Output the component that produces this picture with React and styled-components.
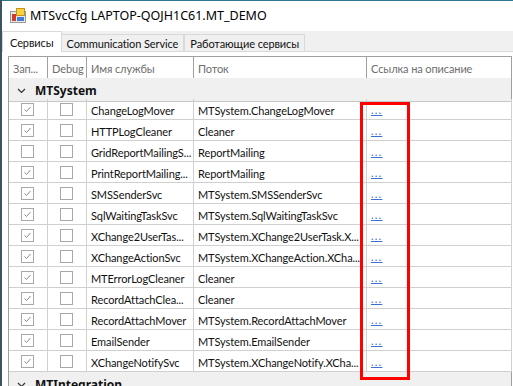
import React from 'react';
import styled, { createGlobalStyle } from 'styled-components';

// строки грида: [запуск, имя, поток]
const rows = [
    [true, 'ChangeLogMover', 'MTSystem.ChangeLogMover'],
    [true, 'HTTPLogCleaner', 'Cleaner'],
    [false, 'GridReportMailingS...', 'ReportMailing'],
    [true, 'PrintReportMailing...', 'ReportMailing'],
    [true, 'SMSSenderSvc', 'MTSystem.SMSSenderSvc'],
    [true, 'SqlWaitingTaskSvc', 'MTSystem.SqlWaitingTaskSvc'],
    [true, 'XChange2UserTas...', 'MTSystem.XChange2UserTask.X...'],
    [true, 'XChangeActionSvc', 'MTSystem.XChangeAction.XCha...'],
    [true, 'MTErrorLogCleaner', 'Cleaner'],
    [true, 'RecordAttachClea...', 'Cleaner'],
    [true, 'RecordAttachMover', 'MTSystem.RecordAttachMover'],
    [true, 'EmailSender', 'MTSystem.EmailSender'],
    [true, 'XChangeNotifySvc', 'MTSystem.XChangeNotify.XCha...'],
];

const tabs = ['Сервисы', 'Communication Service', 'Работающие сервисы'];

function AppIcon() {
    return (
        <svg width="16" height="15" viewBox="0 0 16 15">
            <rect x="0.5" y="3.5" width="15" height="11" fill="#e8e8e8" stroke="#9a9a9a" />
            <rect x="2" y="6" width="4" height="7" fill="#d23a2a" />
            <rect x="6.5" y="0.5" width="8" height="7" fill="#f7d23c" stroke="#c8911a" />
            <rect x="7" y="9" width="7" height="4" fill="#3d7fd6" />
        </svg>
    );
}

function Check({ on }) {
    return (
        <CheckBox>
            {on && (
                <svg width="11" height="11" viewBox="0 0 11 11">
                    <path d="M2.5 5.5 L4.5 7.5 L8.5 3" fill="none" stroke="#8a8a8a" strokeWidth="1" />
                </svg>
            )}
        </CheckBox>
    );
}

function Chevron() {
    return (
        <svg width="9" height="6" viewBox="0 0 9 6">
            <path d="M1 1 L4.5 4.5 L8 1" fill="none" stroke="#333" strokeWidth="1.2" />
        </svg>
    );
}

function App() {
    return (
        <>
            <GlobalStyle />
            <Screen>
                <Window>
                    <TitleBar>
                        <AppIcon />
                        <Title>MTSvcCfg LAPTOP-QOJH1C61.MT_DEMO</Title>
                    </TitleBar>
                    <Body>
                        <TabStrip>
                            {tabs.map((t, i) => (
                                <Tab key={t} active={i === 0}>{t}</Tab>
                            ))}
                        </TabStrip>
                        <Panel>
                            <Grid>
                                <HeadCell>Зап...</HeadCell>
                                <HeadCell>Debug</HeadCell>
                                <HeadCell>Имя службы</HeadCell>
                                <HeadCell>Поток</HeadCell>
                                <HeadCell>Ссылка на описание</HeadCell>

                                <GroupRow>
                                    <Chevron />
                                    <GroupName>MTSystem</GroupName>
                                </GroupRow>

                                {rows.map(([on, name, flow], i) => (
                                    <React.Fragment key={i}>
                                        <CheckCell><Check on={on} /></CheckCell>
                                        <CheckCell><Check on={false} /></CheckCell>
                                        <Cell>{name}</Cell>
                                        <Cell>{flow}</Cell>
                                        <Cell><Link>...</Link></Cell>
                                    </React.Fragment>
                                ))}

                                <GroupRow>
                                    <Chevron />
                                    <GroupName>MTIntegration</GroupName>
                                </GroupRow>
                            </Grid>
                        </Panel>
                    </Body>
                </Window>
                <Highlight />
            </Screen>
        </>
    );
}

export default App;


// styled-components

const GlobalStyle = createGlobalStyle`
    html, body {
        margin: 0;
        padding: 0;
        background: #2d6b83;
        overflow: hidden;
    }
`

const Screen = styled.div`
    position: relative;
    width: 513px;
    height: 386px;
    overflow: hidden;
    background: linear-gradient(90deg, #3b5560 0 2px, #2d7890 2px);
    font-family: "Lato", "Noto Sans", sans-serif;
    font-size: 11px;
    letter-spacing: -0.1px;
    color: #111;
`

const Window = styled.div`
    margin: 1px 0 0 2px;
    width: 511px;
    height: 385px;
    background: #f0f0f0;
    display: flex;
    flex-direction: column;
`

const TitleBar = styled.div`
    height: 30px;
    background: #fff;
    display: flex;
    align-items: center;
    gap: 4px;
    padding: 0 0 2px 8px;
    box-sizing: border-box;
`

const Title = styled.span`
    font-family: "Noto Sans", "Open Sans", sans-serif;
    font-size: 12.5px;
    letter-spacing: 0;
    color: #000;
`

const Body = styled.div`
    flex: 1;
    display: flex;
    flex-direction: column;
    min-height: 0;
`

const TabStrip = styled.div`
    display: flex;
    align-items: flex-end;
    height: 21px;
    position: relative;
    z-index: 1;
    font-size: 11px;
`

const Tab = styled.div`
    height: ${p => p.active ? '21px' : '18px'};
    box-sizing: border-box;
    padding: ${p => p.active ? '0 7px' : '1px 5px 0'};
    margin-right: ${p => p.active ? '0' : '1px'};
    margin-left: ${p => p.active ? '0' : '-1px'};
    background: ${p => p.active ? '#fff' : '#f0f0f0'};
    border: 1px solid #d9d9d9;
    border-bottom: ${p => p.active ? 'none' : '1px solid #d9d9d9'};
    display: flex;
    align-items: center;
    white-space: nowrap;
    &:first-child { margin-left: 0; }
`

const Panel = styled.div`
    flex: 1;
    min-height: 0;
    margin-top: -1px;
    border-top: 1px solid #d9d9d9;
    background: #fff;
    padding: 4px 0 0 6px;
    overflow: hidden;
`

const Grid = styled.div`
    display: grid;
    grid-template-columns: 39px 39px 107px 173px 145px;
    grid-auto-rows: 21px;
    width: 504px;
    box-sizing: border-box;
    border-left: 1px solid #a0a0a0;
    border-top: 1px solid #a0a0a0;
    background: #fff;
`

const HeadCell = styled.div`
    height: 23px;
    box-sizing: border-box;
    border-right: 1px solid #a0a0a0;
    border-bottom: 1px solid #a0a0a0;
    padding: 0 4px;
    display: flex;
    align-items: center;
    color: #6d6d6d;
    white-space: nowrap;
    overflow: hidden;
`

const GroupRow = styled.div`
    grid-column: 1 / -1;
    height: 24px;
    box-sizing: border-box;
    border-right: 1px solid #a0a0a0;
    border-bottom: 1px solid #c8c8c8;
    background: #f0f0f0;
    display: flex;
    align-items: center;
    gap: 9px;
    padding: 2px 0 0 8px;
`

const GroupName = styled.span`
    font-family: "Noto Sans", "Open Sans", sans-serif;
    font-weight: 700;
    font-size: 12px;
    letter-spacing: 0;
`

const Cell = styled.div`
    box-sizing: border-box;
    border-right: 1px solid #d0d0d0;
    border-bottom: 1px solid #d0d0d0;
    padding: 2px 3px 0 4px;
    display: flex;
    align-items: center;
    white-space: nowrap;
    overflow: hidden;
`

const CheckCell = styled(Cell)`
    justify-content: center;
    padding: 1px 1px 0 0;
`

const CheckBox = styled.div`
    width: 13px;
    height: 13px;
    box-sizing: border-box;
    border: 1px solid #a8a8a8;
    background: #fff;
    display: flex;
    align-items: center;
    justify-content: center;
`

const Link = styled.span`
    color: #3a6fd4;
    text-decoration: underline;
    letter-spacing: 1.2px;
    padding-bottom: 2px;
`

const Highlight = styled.div`
    position: absolute;
    left: 360px;
    top: 102px;
    width: 50px;
    height: 278px;
    box-sizing: border-box;
    border: 3px solid #ff0000;
    pointer-events: none;
`
